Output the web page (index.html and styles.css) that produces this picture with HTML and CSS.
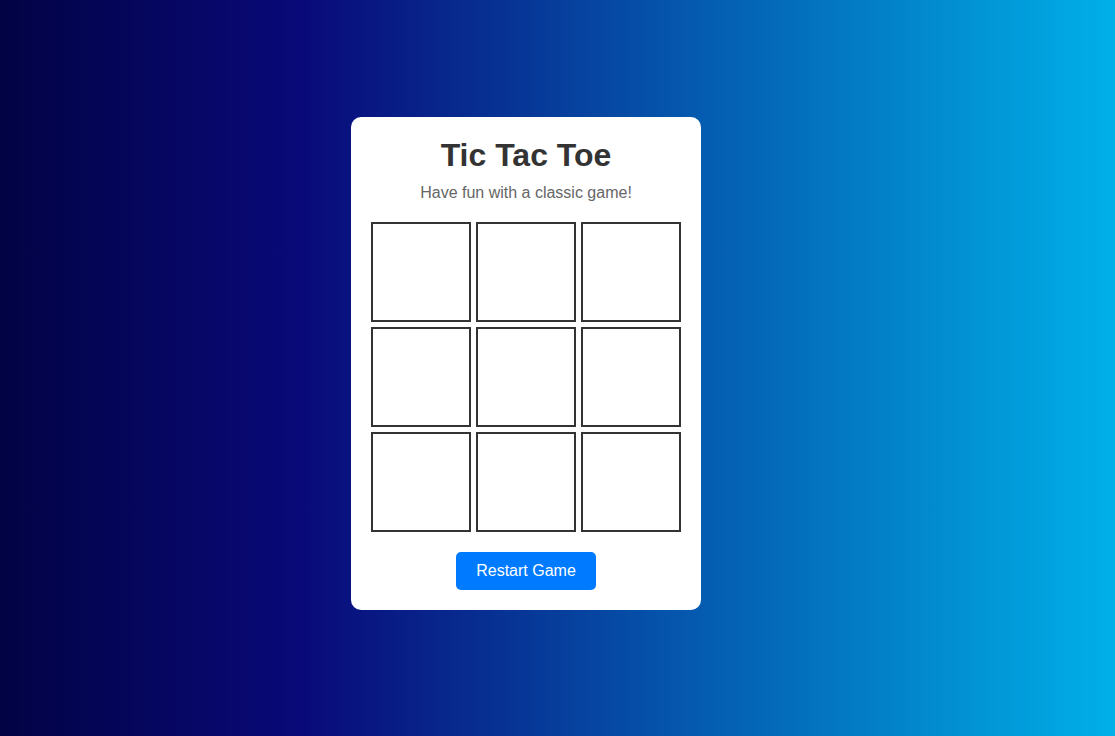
FILE: index.html
```html
<!DOCTYPE html>
<html lang="en">
<head>
<meta charset="utf-8">
<title>Tic Tac Toe</title>
<link rel="stylesheet" href="styles.css">
</head>
<body>
  <div class="card">
    <h1 class="title">Tic Tac Toe</h1>
    <p class="subtitle">Have fun with a classic game!</p>
    <div class="board">
      <div class="cell"></div>
      <div class="cell"></div>
      <div class="cell"></div>
      <div class="cell"></div>
      <div class="cell"></div>
      <div class="cell"></div>
      <div class="cell"></div>
      <div class="cell"></div>
      <div class="cell"></div>
    </div>
    <button class="restart">Restart Game</button>
  </div>
</body>
</html>
```
FILE: styles.css
```css
html, body {
  margin: 0;
  height: 100%;
}
body {
  font-family: "Liberation Sans", Arial, sans-serif;
  background: linear-gradient(to right, #020344 0%, #090979 27%, #00b0e8 100%);
  display: flex;
  align-items: center;
  justify-content: center;
  padding: 0 63px 10px 0;
  box-sizing: border-box;
}
.card {
  background: #fff;
  border-radius: 10px;
  padding: 20px;
  display: flex;
  flex-direction: column;
  align-items: center;
}
.title {
  margin: 0 0 10px;
  font-size: 32px;
  font-weight: bold;
  color: #333;
}
.subtitle {
  margin: 0 0 20px;
  font-size: 16px;
  color: #666;
}
.board {
  display: grid;
  grid-template-columns: repeat(3, 100px);
  grid-auto-rows: 100px;
  gap: 5px;
}
.cell {
  border: 2px solid #333;
  box-sizing: border-box;
  background: #fff;
}
.restart {
  margin-top: 20px;
  padding: 10px 20px;
  font-family: inherit;
  font-size: 16px;
  color: #fff;
  background: #007bff;
  border: none;
  border-radius: 5px;
  cursor: pointer;
}
```
